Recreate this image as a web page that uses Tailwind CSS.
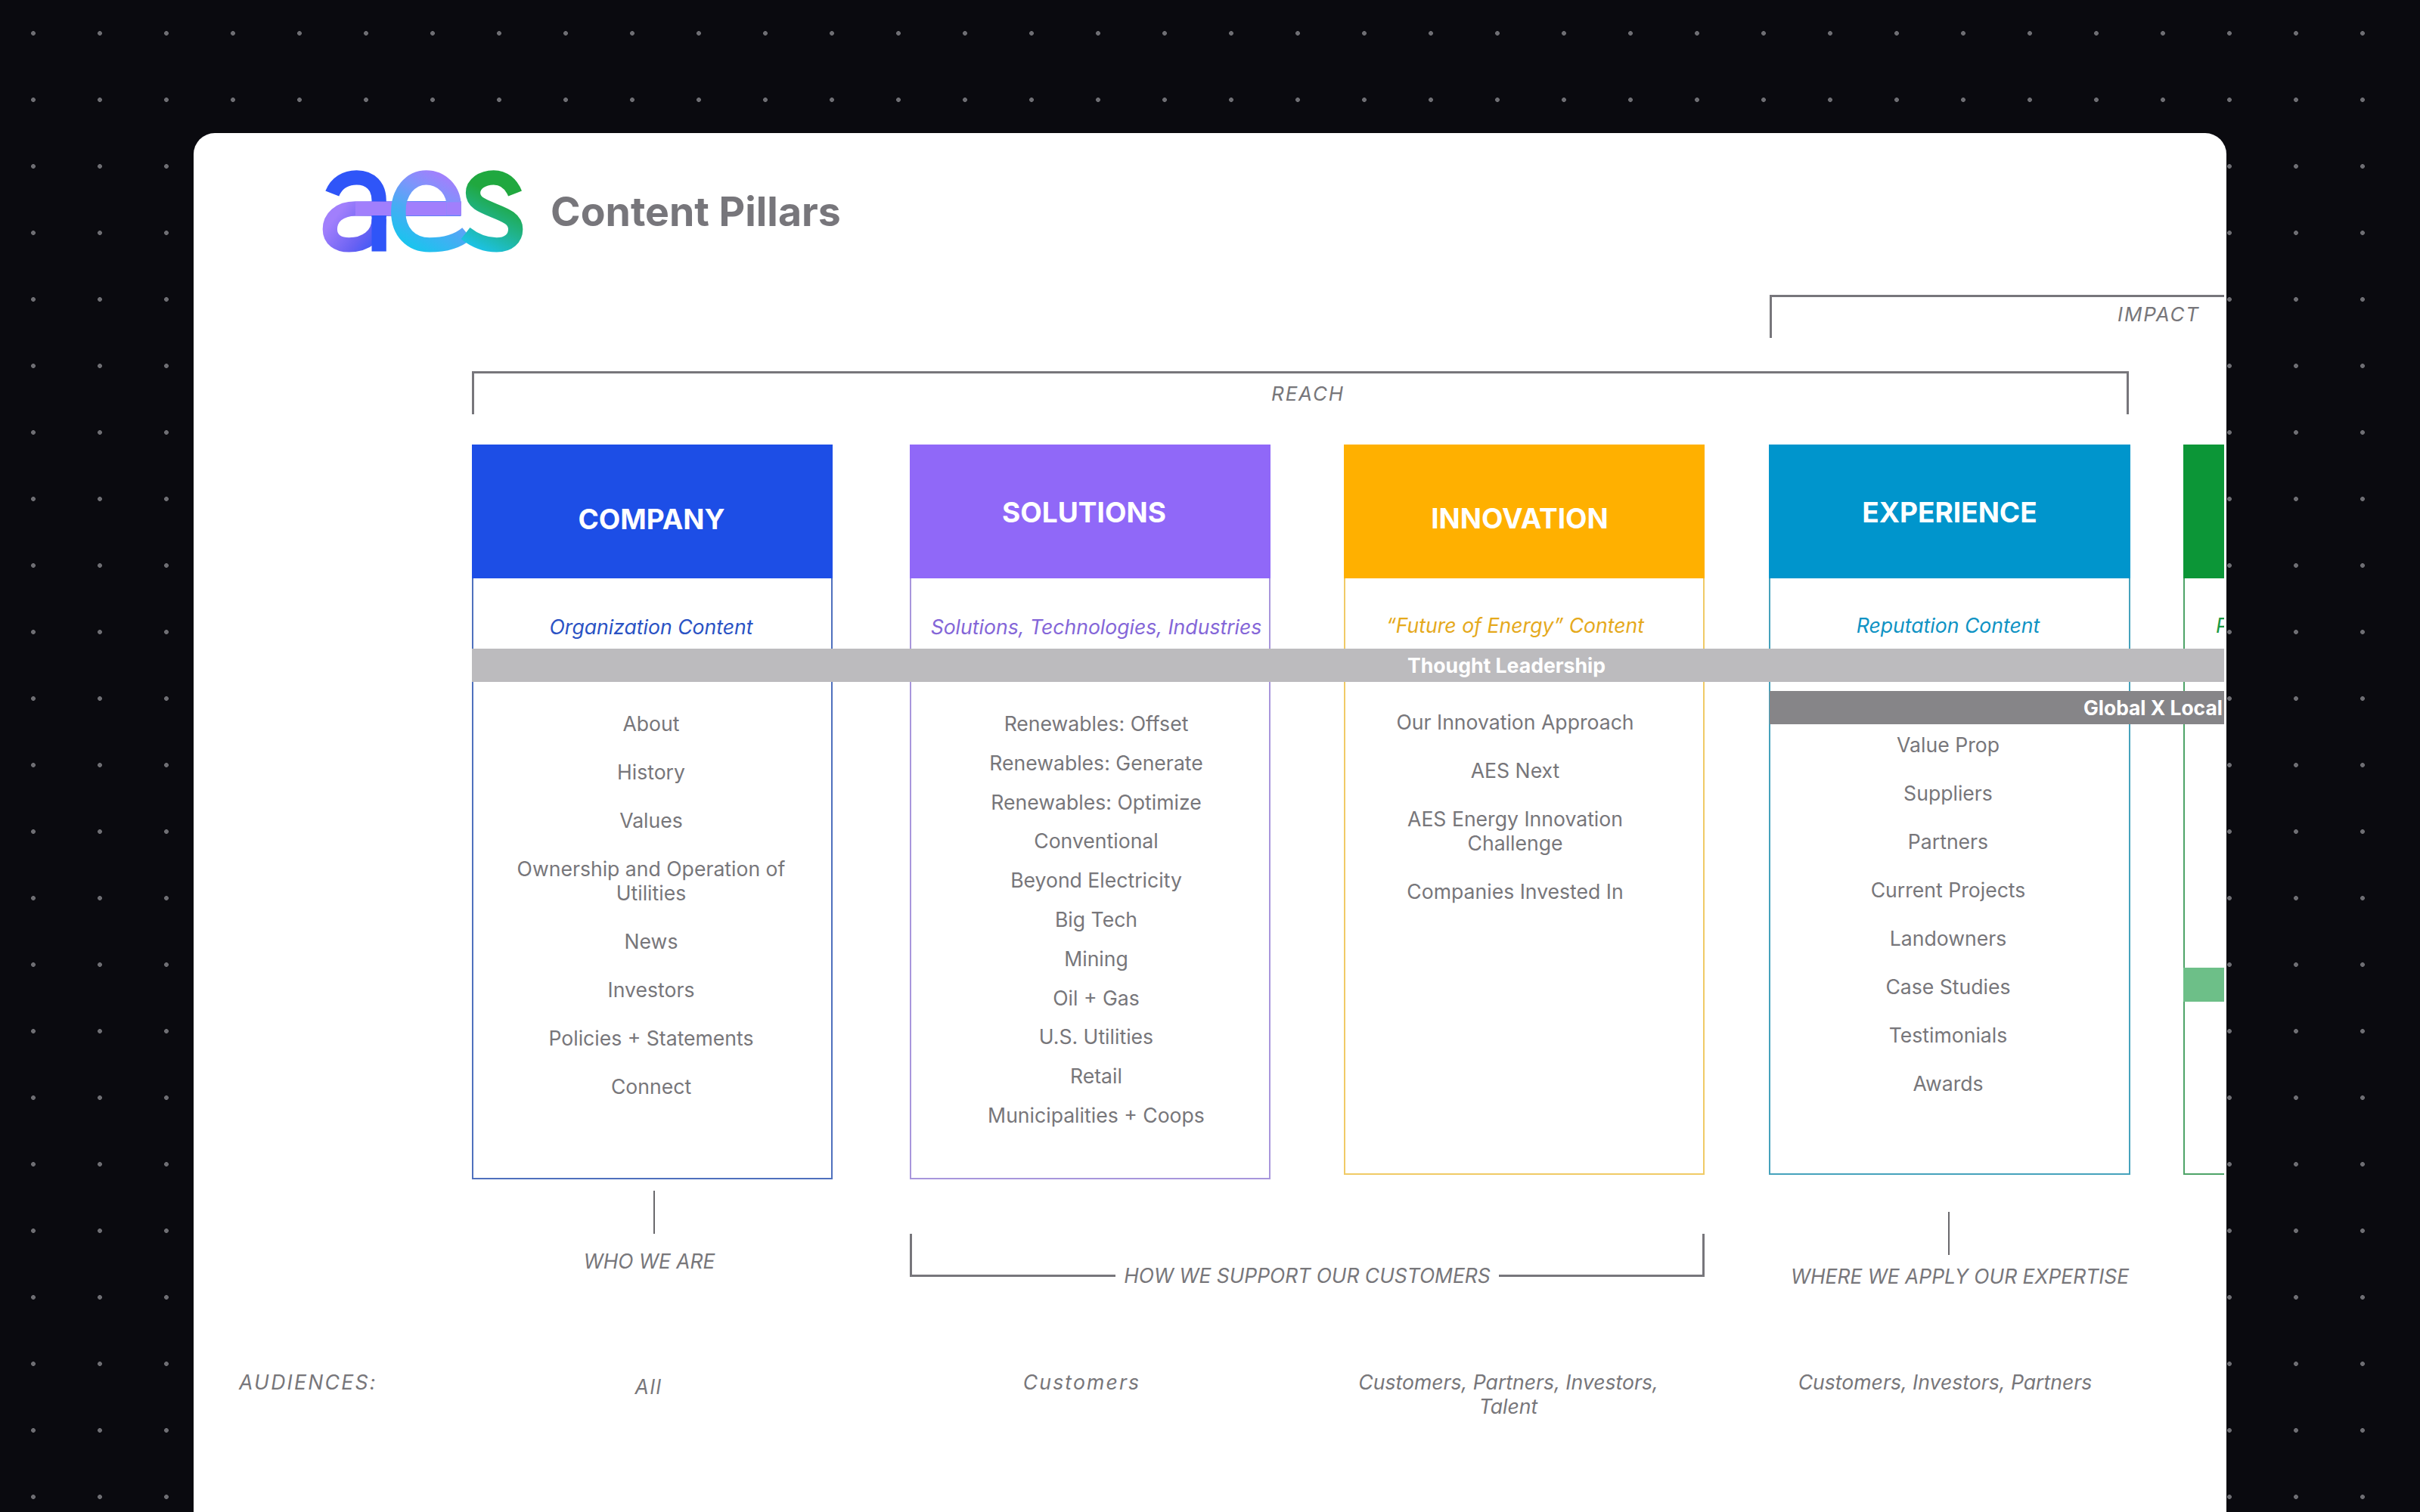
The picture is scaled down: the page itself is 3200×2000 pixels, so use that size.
<!DOCTYPE html>
<html>
<head>
<meta charset="utf-8">
<script src="https://cdn.jsdelivr.net/npm/@tailwindcss/browser@4"></script>
</head>
<body class="m-0">
<div class="w-[3200px] h-[2000px] overflow-hidden pt-[176px] pl-[256px] bg-[#0a0a0f] bg-[radial-gradient(circle,#6e6e73_2.6px,transparent_3.2px)] bg-[length:88px_88px] font-[family-name:Inter,sans-serif] text-[#77767a]">
  <div class="w-[2688px] h-[1824px] bg-white rounded-t-[28px] overflow-hidden">
    <div class="w-[2685px] h-full overflow-hidden">

      <!-- Header -->
      <div class="flex items-center pl-[170px] pt-[49px] h-[158px]">
        <svg class="w-[266px] h-[109px] shrink-0" viewBox="138 105 800 327" fill="none" stroke-width="58">
          <defs>
            <linearGradient id="bowl" gradientUnits="userSpaceOnUse" x1="190" y1="290" x2="370" y2="430">
              <stop offset="0" stop-color="#a17ffc"/><stop offset="0.55" stop-color="#6a62f3"/><stop offset="1" stop-color="#2f55f8"/>
            </linearGradient>
            <linearGradient id="eee" gradientUnits="userSpaceOnUse" x1="670" y1="150" x2="520" y2="420">
              <stop offset="0" stop-color="#a27ffc"/><stop offset="0.3" stop-color="#7d95fb"/><stop offset="0.62" stop-color="#49abf4"/><stop offset="1" stop-color="#1cc3ee"/>
            </linearGradient>
            <linearGradient id="sss" gradientUnits="userSpaceOnUse" x1="840" y1="210" x2="740" y2="410">
              <stop offset="0" stop-color="#20a83f"/><stop offset="0.5" stop-color="#20b48f"/><stop offset="1" stop-color="#1cc2e6"/>
            </linearGradient>
          </defs>
          <path d="M178 198C195 155 232 134 275 134C330 134 364 170 364 225V290" stroke="#2f55f8"/>
          <path d="M364 300C364 365 310 402 245 402C200 402 169 380 169 340C169 295 205 258 270 258H690" stroke="url(#bowl)"/>
          <path d="M364 285V428" stroke="#2f55f8"/>
          <path d="M270 258H660" stroke="#a17ffc" stroke-width="54"/>
          <path d="M442 258H470" stroke="#5aa4f6" stroke-width="58"/>
          <path d="M662 285V250C662 180 610 134 552 134C490 134 441 190 441 270C441 350 490 402 565 402C630 402 680 385 714 356" stroke="url(#eee)"/>
          <path d="M662 232V284" stroke="#a17ffc"/>
          <path d="M708 356C745 385 790 402 832 402C880 402 907 375 907 340C907 300 870 285 820 265C770 245 738 232 738 195C738 160 775 134 820 134C860 134 890 160 905 198" stroke="url(#sss)"/>
        </svg>
        <h1 class="ml-[36px] text-[53.6px] leading-[64px] font-bold text-[#77767b] whitespace-nowrap">Content Pillars</h1>
      </div>

      <!-- IMPACT bracket -->
      <div class="mt-[56px] ml-[2084px] h-[57px] border-l-[3px] border-t-[3px] border-[#77767b] pr-[32px] text-right italic text-[26px] leading-[32px] tracking-[0.07em] pt-[7px]">IMPACT</div>

      <!-- REACH bracket -->
      <div class="mt-[44px] ml-[368px] w-[2191px] h-[57px] border-l-[3px] border-t-[3px] border-r-[3px] border-[#77767b] pl-[20px] text-center italic text-[26px] leading-[32px] tracking-[0.07em] pt-[11px]">REACH</div>

      <!-- Pillars -->
      <div class="relative mt-[40px] ml-[368px] flex items-start text-[26.6px] leading-[32px]">
        <!-- Company -->
        <section class="w-[477px] h-[972px] shrink-0 flex flex-col">
          <div class="h-[177px] bg-[#1d4ee6] text-white text-[37px] font-bold flex items-center justify-center pt-[20px] pr-[2px]">COMPANY</div>
          <div class="flex-1 border-2 border-t-0 border-[#4f70bd] pt-[48px] pr-[3px] text-center">
            <p class="italic text-[#2a52c4]">Organization Content</p>
            <ul class="mt-[96px] flex flex-col gap-[32px] px-[48px]">
              <li>About</li><li>History</li><li>Values</li><li>Ownership and Operation of Utilities</li><li>News</li><li>Investors</li><li>Policies + Statements</li><li>Connect</li>
            </ul>
          </div>
        </section>
        <!-- Solutions -->
        <section class="w-[477px] h-[972px] shrink-0 ml-[102px] flex flex-col">
          <div class="h-[177px] bg-[#9068f8] text-white text-[37px] font-bold flex items-center justify-center pt-[3px] pr-[16px]">SOLUTIONS</div>
          <div class="flex-1 border-2 border-t-0 border-[#a896dc] pt-[48px] pl-[16px] text-center">
            <p class="italic text-[#8466d8] whitespace-nowrap">Solutions, Technologies, Industries</p>
            <ul class="mt-[96px] flex flex-col gap-[19.8px]">
              <li>Renewables: Offset</li><li>Renewables: Generate</li><li>Renewables: Optimize</li><li>Conventional</li><li>Beyond Electricity</li><li>Big Tech</li><li>Mining</li><li>Oil + Gas</li><li>U.S. Utilities</li><li>Retail</li><li>Municipalities + Coops</li>
            </ul>
          </div>
        </section>
        <!-- Innovation -->
        <section class="w-[477px] h-[966px] shrink-0 ml-[97px] flex flex-col">
          <div class="h-[177px] bg-[#ffb000] text-white text-[37px] font-bold flex items-center justify-center pt-[19px] pr-[12px]">INNOVATION</div>
          <div class="flex-1 border-2 border-t-0 border-[#f0ca66] pt-[46px] pr-[24px] text-center">
            <p class="italic text-[#e5a91c]">“Future of Energy” Content</p>
            <ul class="mt-[96px] flex flex-col gap-[32px] px-[50px]">
              <li>Our Innovation Approach</li><li>AES Next</li><li>AES Energy Innovation Challenge</li><li>Companies Invested In</li>
            </ul>
          </div>
        </section>
        <!-- Experience -->
        <section class="w-[478px] h-[966px] shrink-0 ml-[85px] flex flex-col">
          <div class="h-[177px] bg-[#0095cc] text-white text-[37px] font-bold flex items-center justify-center pt-[3px]">EXPERIENCE</div>
          <div class="flex-1 border-2 border-t-0 border-[#46a2bc] pt-[46px] pr-[4px] text-center">
            <p class="italic text-[#0f93c4]">Reputation Content</p>
            <ul class="mt-[126px] flex flex-col gap-[32px]">
              <li>Value Prop</li><li>Suppliers</li><li>Partners</li><li>Current Projects</li><li>Landowners</li><li>Case Studies</li><li>Testimonials</li><li>Awards</li>
            </ul>
          </div>
        </section>
        <!-- Green (cut off by the card edge) -->
        <section class="w-[477px] h-[966px] shrink-0 ml-[70px] flex flex-col">
          <div class="h-[177px] bg-[#0c9637]"></div>
          <div class="flex-1 border-2 border-t-0 border-[#4ea468] pt-[46px] pl-[41px]">
            <p class="italic text-[#1a9a44] whitespace-nowrap">Purpose Content</p>
          </div>
        </section>

        <!-- Bands lying across the pillars -->
        <div class="absolute left-0 top-[270px] w-[2736px] h-[44px] bg-[#bcbbbe] text-white text-[26.6px] leading-[45px] font-bold text-center">Thought Leadership</div>
        <div class="absolute left-[1716px] top-[326px] w-[1000px] h-[44px] bg-[#868588] text-white text-[26.4px] leading-[45px] font-bold pl-[415px] whitespace-nowrap">Global X Local</div>
        <div class="absolute left-[2263px] top-[692px] w-[300px] h-[45px] bg-[#6dbf88]"></div>
      </div>

      <!-- Captions -->
      <div class="ml-[368px] flex items-start mt-[15px] italic text-[26.4px] leading-[32px]">
        <div class="w-[477px] shrink-0 flex flex-col items-center">
          <div class="w-[2px] h-[57px] bg-[#6a696d] ml-[5px]"></div>
          <p class="mt-[20px] mr-[8px]">WHO WE ARE</p>
        </div>
        <div class="w-[1051px] shrink-0 ml-[102px] mt-[57px] flex items-end h-[57px]">
          <div class="flex-1 h-full border-l-[3px] border-b-[3px] border-[#77767b]"></div>
          <p class="w-[507px] text-center whitespace-nowrap mb-[-14px]">HOW WE SUPPORT OUR CUSTOMERS</p>
          <div class="flex-1 h-full border-r-[3px] border-b-[3px] border-[#77767b]"></div>
        </div>
        <div class="w-[478px] shrink-0 ml-[85px] mt-[28px]">
          <div class="w-[2px] h-[57px] bg-[#6a696d] ml-[237px]"></div>
          <p class="mt-[12px] pl-[29px] whitespace-nowrap">WHERE WE APPLY OUR EXPERTISE</p>
        </div>
      </div>

      <!-- Audiences -->
      <div class="ml-[60px] mt-[108px] flex items-start italic text-[26.6px] leading-[32px] text-center">
        <p class="w-[308px] text-left tracking-[0.085em] whitespace-nowrap">AUDIENCES:</p>
        <p class="w-[477px] shrink-0 pt-[6px] pr-[10px] tracking-[0.06em]">All</p>
        <p class="w-[477px] shrink-0 ml-[102px] pr-[22px] tracking-[0.08em]">Customers</p>
        <p class="w-[477px] shrink-0 ml-[97px] pr-[42px]">Customers, Partners, Investors, Talent</p>
        <p class="w-[478px] shrink-0 ml-[85px] pr-[12px] whitespace-nowrap">Customers, Investors, Partners</p>
      </div>

    </div>
  </div>
</div>
</body>
</html>
